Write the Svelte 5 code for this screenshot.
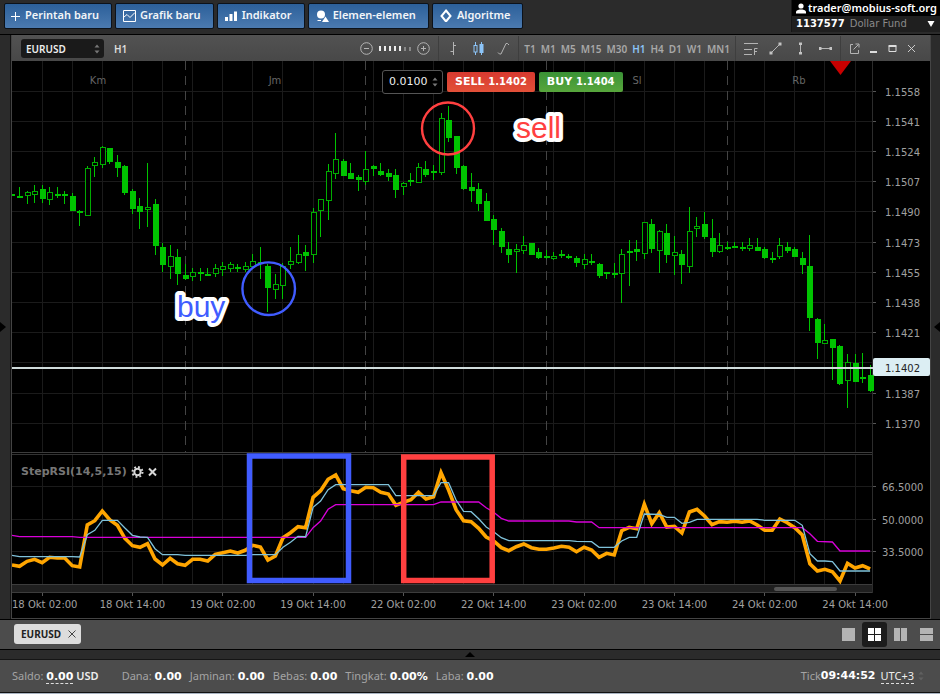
<script>
  const actions = [
    { id: 'plus', label: 'Perintah baru' },
    { id: 'chart', label: 'Grafik baru' },
    { id: 'bars', label: 'Indikator' },
    { id: 'shapes', label: 'Elemen-elemen' },
    { id: 'diamond', label: 'Algoritme' }
  ];
  const frames = ['T1', 'M1', 'M5', 'M15', 'M30', 'H1', 'H4', 'D1', 'W1', 'MN1'];
  let frame = $state('H1');
  let volume = $state('0.0100');
  let layout = $state('grid');
  const layouts = ['single', 'grid', 'columns', 'rows'];

  // One candle per hour: high, low, body top, body bottom, hollow flag
  const candles = [
    [194,196,194,196],[187,198,196,198],[191,204,192,196,1],[185,203,191,195,1],[185,203,189,199],[187,205,192,200,1],
    [187,198,194,196],[191,204,194,196],[193,211,196,211],[210,226,211,213],[166,216,168,216,1],[157,177,162,166,1],
    [146,168,147,165,1],[148,164,148,162],[155,177,162,168],[165,195,166,193],[189,214,191,209],[198,229,206,212],
    [163,227,207,210,1],[199,255,204,246],[243,272,247,265],[245,279,256,267,1],[249,285,257,274],[264,280,275,279],
    [268,281,272,277,1],[268,281,272,274],[268,276,274,276],[264,277,268,274,1],[262,276,266,270,1],[262,272,264,269,1],
    [264,272,267,269],[262,272,266,270,1],[254,268,261,267,1],[247,279,262,264],[264,312,266,288],[274,299,284,290,1],
    [263,299,266,286,1],[247,269,261,265,1],[235,264,254,263,1],[245,271,252,256],[208,263,212,255,1],[199,237,199,211,1],
    [164,220,171,201,1],[133,179,159,174,1],[159,176,161,176],[163,179,173,179],[175,191,177,180],[151,185,169,182,1],
    [165,176,166,169],[163,176,171,175],[169,181,173,177],[169,198,175,190],[182,195,183,187,1],[173,186,180,182],
    [163,183,167,183,1],[161,177,169,175],[165,180,171,173],[113,175,118,173,1],[106,142,120,138],[136,174,136,168],
    [165,190,166,189],[173,202,187,191],[183,211,189,204],[193,221,201,221],[215,245,219,230],[228,253,231,247],
    [242,263,249,255],[244,273,249,252,1],[236,254,245,251,1],[243,255,243,255],[248,259,252,258],[250,259,256,258],
    [252,260,256,259,1],[250,258,254,256],[254,259,256,258],[256,267,258,263],[254,269,259,265,1],[254,265,261,263],
    [263,278,264,276],[272,279,272,274],[263,278,273,275],[249,303,254,274,1],[240,286,251,253],[240,261,249,252],
    [222,259,222,254,1],[219,253,224,249],[230,273,231,251,1],[224,263,233,255],[236,275,252,256,1],[250,284,254,265],
    [207,273,231,267,1],[217,237,226,229,1],[212,239,224,237],[219,257,238,252],[233,253,245,252,1],[242,250,247,249],
    [242,248,246,248],[242,251,247,249],[238,251,245,249,1],[238,251,247,251],[247,259,249,258],[252,263,258,260],
    [238,259,245,257,1],[242,253,247,251],[247,257,249,257],[252,274,258,265],[235,331,266,318],[318,359,319,343],
    [324,344,340,344,1],[339,380,339,348],[345,385,346,384],[354,408,362,381,1],[354,382,363,382],[353,383,377,379],
    [365,392,375,391]
  ];

  // Indicator series as [candle index, offset in thirds of a pixel below the pane's origin]
  const rsi = [375,379,364,358,368,352,354,354,377,381,255,242,213,240,256,295,317,322,311,357,375,355,371,376,358,358,363,343,338,333,339,331,316,321,360,348,293,278,260,263,172,152,118,105,146,152,157,142,143,157,162,196,187,179,157,177,170,98,150,209,242,245,265,291,303,323,332,320,312,323,328,328,324,319,322,335,322,330,352,340,345,272,262,266,193,251,218,261,259,279,216,208,228,254,245,247,244,247,243,255,271,271,237,248,263,285,371,393,388,395,423,370,384,377,387].map((v, i) => [i, v]);
  const fast = [[0,346],[1,350],[8,350],[9,351],[10,284],[11,271],[12,241],[14,241],[15,264],[16,286],[17,291],[18,292],[19,326],[20,344],[22,344],[23,346],[31,346],[32,344],[35,344],[36,322],[37,307],[38,289],[39,290],[40,202],[41,183],[42,149],[43,134],[50,134],[51,167],[56,167],[57,128],[58,128],[59,180],[60,214],[61,215],[62,236],[63,261],[64,275],[65,293],[66,302],[74,302],[75,304],[77,305],[78,322],[80,322],[81,303],[82,292],[83,292],[84,222],[86,223],[87,232],[88,232],[89,250],[90,247],[91,238],[99,238],[100,241],[104,241],[105,256],[106,341],[107,363],[108,363],[109,365],[110,393],[114,393]];
  const slow = [[0,286],[1,290],[8,290],[9,292],[39,292],[40,263],[41,243],[42,208],[43,194],[56,194],[57,186],[62,186],[63,203],[64,217],[65,235],[66,243],[74,243],[75,246],[77,246],[78,263],[105,263],[106,281],[107,304],[109,306],[110,333],[114,333]];

  const x = (i) => 12 + 7.527 * i;
  const line = (series) => series.map(([i, v]) => `${x(i).toFixed(1)},${(440 + v / 3).toFixed(1)}`).join(' ');

  const prices = ['1.1558', '1.1541', '1.1524', '1.1507', '1.1490', '1.1473', '1.1455', '1.1438', '1.1421', '', '1.1387', '1.1370'];
  const priceY = (k) => Math.round(90.6 + 30.2 * k);
  const levels = [['66.5000', 486], ['50.0000', 519], ['33.5000', 551]];
  const times = ['18 Okt 02:00', '18 Okt 14:00', '19 Okt 02:00', '19 Okt 14:00', '22 Okt 02:00', '22 Okt 14:00', '23 Okt 02:00', '23 Okt 14:00', '24 Okt 02:00', '24 Okt 14:00'];
  const days = [[23, 'Km', 98], [47, 'Jm', 275], [71, 'Sl', 637], [95, 'Rb', 799]];
  const columns = Array.from({ length: 28 }, (_, k) => Math.floor(x(4 + 4 * k)));

  const sums = [['Dana:', '0.00'], ['Jaminan:', '0.00'], ['Bebas:', '0.00'], ['Tingkat:', '0.00%'], ['Laba:', '0.00']];
</script>

{#snippet spin()}
  <svg class="spin" viewBox="0 0 6 10" width="6" height="10" aria-hidden="true"><path d="M0.5 3.5 3 0.5 5.5 3.5ZM0.5 6.5 3 9.5 5.5 6.5Z" /></svg>
{/snippet}

<div class="app">
  <header class="top">
    <nav class="actions">
      {#each actions as a (a.id)}
        <button class="action">
          <svg viewBox={a.id === 'plus' ? '2 0 10 14' : '0 0 14 14'} width={a.id === 'plus' ? 10 : 14} height="14" aria-hidden="true">
            {#if a.id === 'plus'}
              <path d="M2 8.5H11M6.5 4V13" class="s" />
            {:else if a.id === 'chart'}
              <path d="M1.5 2.5H13.500V13.500H1.500ZM2 9 5 6.500 8 9.500 13 4.500" class="s" />
            {:else if a.id === 'bars'}
              <path d="M1 9H4V13H1ZM5.500 6H8.500V13H5.500ZM10 3.500H13V13H10Z" class="f" />
            {:else if a.id === 'shapes'}
              <circle cx="6" cy="6.500" r="4" class="f" /><path d="M7 14 10.500 8.500 14 14Z" class="f" /><path d="M2.500 12.500H6" class="s" />
            {:else}
              <path d="M7 2.500 11.500 8 7 13.500 2.500 8Z" class="s thick" />
            {/if}
          </svg>
          {a.label}
        </button>
      {/each}
    </nav>
    <button class="account">
      <span class="user">
        <svg viewBox="0 0 10 11" width="10" height="11" aria-hidden="true"><circle cx="5" cy="3" r="2.600" /><path d="M0 10.500V9Q0 7.300 3.500 6.500H6.500Q10 7.300 10 9V10.500Z" /></svg>
        trader@mobius-soft.org
      </span>
      <span class="fund"><b>1137577</b><i>Dollar Fund</i>
        <svg viewBox="0 0 8 6" width="8" height="6" aria-hidden="true"><path d="M0.500 0H7.500L4 6Z" /></svg>
      </span>
    </button>
  </header>

  <div class="work">
    <aside class="rail"><svg viewBox="0 0 6 10" width="6" height="10" aria-hidden="true"><path d="M0 0 6 5 0 10Z" /></svg></aside>
    <main class="panel">
      <div class="bar">
        <span class="symbol">
          <select aria-label="Instrument"><option>EURUSD</option></select>
          {@render spin()}
        </span>
        <span class="period">{frame}</span>
        <div class="zoom">
          <button aria-label="Zoom out"><svg viewBox="0 0 13 13" width="13" height="13"><circle cx="6.500" cy="6.500" r="5.800" /><path d="M4 6.500H9" /></svg></button>
          <svg class="ticks" viewBox="0 0 32 5" width="32" height="5" aria-hidden="true">
            {#each [0, 1, 2, 3, 4, 5, 6] as t (t)}<rect x={t * 5} y={t < 5 ? 0 : 1} width="2" height={t < 5 ? 5 : 4} fill={t < 5 ? '#eee' : '#888'} />{/each}
          </svg>
          <button aria-label="Zoom in"><svg viewBox="0 0 13 13" width="13" height="13"><circle cx="6.500" cy="6.500" r="5.800" /><path d="M4 6.500H9M6.500 4V9" /></svg></button>
        </div>
        <div class="group">
          <button aria-label="Bars"><svg viewBox="0 0 13 13" width="13" height="13"><path d="M6.500 0V13M3.500 9.500H6.500M6.500 3.500H9" /></svg></button>
          <button aria-label="Candles"><svg viewBox="0 0 13 13" width="13" height="13"><g stroke="#8cc4f8"><path d="M3.500 0V3.500M3.500 10V13M9.500 0V13" /><rect x="2" y="3.500" width="3" height="6.500" /><rect x="8" y="2.500" width="3" height="8" fill="#8cc4f8" /></g></svg></button>
          <button aria-label="Line"><svg viewBox="0 0 13 13" width="13" height="13"><path d="M1 10.500 2.500 12H4L9 1.500H10.500L12 3" /></svg></button>
        </div>
        <div class="group frames">
          {#each frames as f (f)}
            <button class:on={f === frame} onclick={() => (frame = f)}>{f}</button>
          {/each}
        </div>
        <div class="group">
          <button aria-label="Fibonacci"><svg viewBox="0 0 14 13" width="14" height="13"><path d="M0 1.500H14M0 7.500H8M0 12.500H8M10.500 13V6.500H13.500M10.500 9.500H13" /></svg></button>
          <button aria-label="Trend line"><svg viewBox="0 0 13 13" width="13" height="13"><path d="M2 11 11 2" /><path d="M0.500 9.500H3.500V12.500H0.500ZM9.500 0.500H12.500V3.500H9.500Z" class="fill" /></svg></button>
          <button aria-label="Vertical line"><svg viewBox="0 0 13 13" width="13" height="13"><path d="M6.500 2V11" /><path d="M5 0.500H8V3H5ZM5 10H8V12.500H5Z" class="fill" /></svg></button>
          <button aria-label="Horizontal line"><svg viewBox="0 0 13 13" width="13" height="13"><path d="M2 6.500H11" /><path d="M0 5H2.500V8H0ZM10.500 5H13V8H10.500Z" class="fill" /></svg></button>
        </div>
        <div class="group window">
          <button aria-label="Detach"><svg viewBox="0 0 11 11" width="11" height="11"><path d="M4 1.500H1.500V10.500H9.500V7M4.500 6.500 9.500 1.500M6.500 1H10V4.500" /></svg></button>
          <button aria-label="Minimize"><svg viewBox="0 0 11 11" width="11" height="11"><path d="M2 9H9" stroke="#ddd" stroke-width="2" /></svg></button>
          <button aria-label="Maximize"><svg viewBox="0 0 11 11" width="11" height="11"><path d="M2 3.500V8.500H9V3.500" stroke="#ddd" /><path d="M1.500 3H9.500" stroke="#ddd" stroke-width="2" /></svg></button>
          <button aria-label="Close"><svg viewBox="0 0 11 11" width="11" height="11"><path d="M2 2 9 9M9 2 2 9" stroke="#ccc" /></svg></button>
        </div>
      </div>

      <div class="stage">
        <svg class="chart" viewBox="12 61 918 557" role="img" aria-label="EURUSD H1">
          <rect x="12" y="61" width="918" height="557" fill="#000" />
          <g fill="#1b1b1b" shape-rendering="crispEdges">
            {#each columns as c (c)}<rect x={c} y="61" width="1" height="523" />{/each}
            {#each prices as _, k}<rect x="12" y={priceY(k)} width="861" height="1" />{/each}
            {#each levels as l (l[0])}<rect x="12" y={l[1]} width="861" height="1" />{/each}
          </g>
          <g shape-rendering="crispEdges">
            <rect x="12" y="453" width="861" height="2" fill="#000" />
            <rect x="12" y="452" width="861" height="1" fill="#3c3c3c" />
            <rect x="12" y="454" width="861" height="1" fill="#333" />
            <rect x="12" y="584" width="861" height="9" fill="#1f1f1f" />
            <rect x="12" y="584" width="861" height="1" fill="#3c3c3c" />
            <rect x="12" y="592" width="861" height="1" fill="#3c3c3c" />
            <rect x="872" y="61" width="1" height="532" fill="#2c2c2c" />
          </g>
          <rect x="774" y="587" width="63" height="4" rx="2" fill="#555" />
          {#each days as d (d[1])}
            <path d="M{Math.floor(x(d[0])) + 0.5} 61V452" stroke="#444" stroke-dasharray="9 6" />
            <text x={d[2]} y="84" class="day">{d[1]}</text>
          {/each}

          <g shape-rendering="crispEdges" fill="#00c400">
            {#each candles as c, i}
              {@const px = Math.floor(x(i))}
              {#if c[4]}
                <rect x={px} y={c[0]} width="1" height={Math.max(0, c[2] - c[0])} />
                <rect x={px} y={c[3]} width="1" height={Math.max(0, c[1] - c[3])} />
                <rect x={px - 1.5} y={c[2] + 0.5} width="5" height={c[3] - c[2] - 1} fill="#000" stroke="#00ac00" />
              {:else}
                <rect x={px} y={c[0]} width="1" height={c[1] - c[0]} />
                <rect x={i ? px - 2 : px} y={c[2]} width={i ? 6 : 3} height={c[3] - c[2]} />
              {/if}
            {/each}
          </g>

          <polyline points={line(rsi)} fill="none" stroke="#ffa500" stroke-width="3.600" />
          <polyline points={line(slow)} fill="none" stroke="#d800d8" stroke-width="1.300" />
          <polyline points={line(fast)} fill="none" stroke="#7fc2da" stroke-width="1.300" />

          <g class="axis">
            {#each prices as p, k}
              {#if p}
                <rect x="873" y={priceY(k)} width="3" height="1" fill="#555" />
                <text x="885" y={priceY(k) + 5}>{p}</text>
              {/if}
            {/each}
            {#each levels as l (l[0])}
              <rect x="873" y={l[1]} width="3" height="1" fill="#555" />
              <text x="882" y={l[1] + 5}>{l[0]}</text>
            {/each}
            {#each times as t, k}
              <rect x={Math.floor(x(4 + 12 * k))} y="593" width="1" height="3" fill="#555" />
              <text x={k ? x(4 + 12 * k) : 12} y="608" text-anchor={k ? 'middle' : 'start'}>{t}</text>
            {/each}
          </g>
          <rect x="12" y="367" width="861" height="2" fill="#cfdbdb" />
          <rect x="873" y="358" width="57" height="18" rx="2" fill="#dceef3" />
          <text x="885" y="372" class="now">1.1402</text>
          <path d="M830 61H851L840.500 75Z" fill="#c80000" />

          <g fill="none">
            <circle cx="448" cy="128.500" r="26" stroke="#ff4040" stroke-width="2.400" />
            <circle cx="268.700" cy="288.700" r="26.300" stroke="#405cff" stroke-width="2.400" />
            <rect x="249.500" y="456" width="99" height="124.500" stroke="#405cff" stroke-width="5.500" />
            <rect x="403.700" y="457" width="88.500" height="123.500" stroke="#ff4040" stroke-width="5.500" />
          </g>
          <text x="177" y="317" class="note" fill="#405cff">buy</text>
          <text x="516" y="138" class="note" fill="#ff4040">sell</text>

          <text x="21" y="475" class="study">StepRSI(14,5,15)</text>
          <g fill="none" stroke="#d8d8d8">
            <circle cx="137.500" cy="472" r="3.200" stroke-width="2" />
            <circle cx="137.500" cy="472" r="5" stroke-width="2" stroke-dasharray="1.800 2.127" />
            <path d="M149 468.500 156 475.500M156 468.500 149 475.500" stroke-width="2" />
          </g>
        </svg>

        <form class="order" onsubmit={(e) => e.preventDefault()}>
          <span class="lot"><input aria-label="Volume" bind:value={volume} />{@render spin()}</span>
          <button class="sell" type="button">SELL <span>1.1402</span></button>
          <button class="buy" type="button">BUY <span>1.1404</span></button>
        </form>
      </div>
    </main>
    <aside class="rail right"><svg viewBox="0 0 6 10" width="6" height="10" aria-hidden="true"><path d="M6 0 0 5 6 10Z" /></svg></aside>
  </div>

  <div class="tabs">
    <button class="tab">EURUSD <svg viewBox="0 0 8 8" width="8" height="8" aria-hidden="true"><path d="M0.500 0.500 7.500 7.500M7.500 0.500 0.500 7.500" stroke="#444" /></svg></button>
    <div class="views">
      {#each layouts as l (l)}
        <button class:on={l === layout} aria-label={l} onclick={() => (layout = l)}>
          <svg viewBox="0 0 13 13" width="13" height="13">
            <rect width="13" height="13" />
            {#if l === 'grid' || l === 'columns'}<path d="M6.500 0V13" />{/if}
            {#if l === 'grid' || l === 'rows'}<path d="M0 6.500H13" />{/if}
          </svg>
        </button>
      {/each}
    </div>
  </div>
  <div class="fold"><svg viewBox="0 0 10 5" width="10" height="5" aria-hidden="true"><path d="M0 5 5 0 10 5Z" /></svg></div>
  <footer class="status">
    <span class="balance">Saldo: <b class="dash">0.00</b> <em>USD</em></span>
    {#each sums as s (s[0])}<span>{s[0]} <b>{s[1]}</b></span>{/each}
    <span class="clock">Tick<b>09:44:52</b> <button>UTC+3</button>{@render spin()}</span>
  </footer>
</div>

<style>
  :global(body) { margin: 0; background: #2a2a2a; }
  .app { font: 11px/14px "Noto Sans", "Open Sans", sans-serif; color: #ddd; background: #2a2a2a; border-bottom: 1px solid #a9b4c2; }
  button, input, select { font: inherit; color: inherit; margin: 0; padding: 0; border: 0; background: none; }
  svg { display: block; flex: none; }

  .top { display: flex; justify-content: space-between; align-items: flex-start; height: 34px; border-bottom: 1px solid #000; background: #2b2b2b; }
  .actions { display: flex; gap: 3px; padding: 3px 4px; }
  .action { display: flex; align-items: center; gap: 4px; height: 26px; padding: 0 12px 2px 6px; border: 1px solid #0c121a; border-radius: 2px; background: linear-gradient(#2c609a, #4b7ab0); color: #f2f5f8; font-weight: 600; white-space: nowrap; }
  .action .s { fill: none; stroke: #fff; stroke-width: 1; }
  .action .thick { stroke-width: 2; }
  .action .f { fill: #fff; }
  .account { width: 149px; text-align: left; background: #1f1f1f; border-left: 1px solid #161616; }
  .user, .fund { display: flex; align-items: center; height: 16px; padding: 0 5px 0 4px; }
  .user { gap: 2px; background: #000; color: #fff; font-weight: 600; white-space: nowrap; }
  .fund { gap: 5px; }
  .fund b, .fund i { font-family: "DejaVu Sans", sans-serif; font-size: 10px; }
  .fund b { color: #fff; }
  .fund i { flex: 1; font-style: normal; color: #8a8a8a; }
  .account svg { fill: #fff; }

  .work { display: flex; border-bottom: 1px solid #000; }
  .rail { width: 11px; display: flex; align-items: center; background: #2b2b2b; box-shadow: inset -1px 0 #111; }
  .rail.right { width: 9px; justify-content: flex-end; box-shadow: none; }
  .rail svg { fill: #000; }
  .panel { flex: 1; min-width: 0; border: 1px solid #444; border-top: 0; }
  .bar { display: flex; align-items: center; box-sizing: border-box; height: 26px; padding-top: 1px; background: linear-gradient(#525252, #484848); }
  .symbol { position: relative; margin-left: 9px; }
  .symbol select { display: block; width: 83px; height: 19px; padding: 0 5px; appearance: none; border-radius: 3px; background: #1a1a1a; color: #eee; font-size: 10px; font-weight: 600; }
  .symbol .spin { position: absolute; right: 4px; top: 5px; }
  .spin { fill: #777; }
  .period { margin-left: 10px; font-size: 10px; font-weight: 600; }
  .zoom { display: flex; align-items: center; gap: 6px; margin-left: auto; padding-right: 8px; }
  .bar button { display: flex; align-items: center; justify-content: center; }
  .bar button svg { fill: none; stroke: #b4b4b4; }
  .bar button .fill { fill: #c4c4c4; stroke: none; }
  .group { display: flex; align-items: center; height: 100%; padding: 0 2px; border-left: 1px solid #3e3e3e; }
  .group button { width: 25px; height: 24px; }
  .frames { gap: 5px; padding: 0 5px 0 5px; color: #a8a8a8; font-size: 10px; font-weight: 600; }
  .frames button { width: auto; }
  .frames .on { color: #8cc4f8; }
  .window { padding: 0 9px 0 4px; }
  .window button { width: 19px; }

  .stage { position: relative; }
  .chart { width: 100%; height: auto; }
  .day, .axis text, .now { font: 10px "DejaVu Sans", sans-serif; fill: #a0a0a0; }
  .day { fill: #666; text-anchor: middle; }
  .now { fill: #222; }
  .note { font: 30px "Liberation Sans", sans-serif; stroke: #fff; stroke-width: 8px; stroke-linejoin: round; paint-order: stroke; }
  .study { font: bold 11px "DejaVu Sans", sans-serif; fill: #777; }
  .order { position: absolute; left: 40.3%; top: 9px; display: flex; align-items: center; gap: 4px; font: 600 11px/14px "DejaVu Sans", sans-serif; }
  .lot { display: flex; align-items: center; box-sizing: border-box; width: 61px; height: 24px; padding: 0 4px 0 6px; border: 1px solid #555; border-radius: 3px; background: #000; }
  .lot input { width: 100%; min-width: 0; outline: 0; color: #eee; font-weight: 400; }
  .sell, .buy { height: 20px; padding: 0 8px; border-radius: 2px; color: #fff; font-weight: 700; white-space: nowrap; }
  .sell span, .buy span { font-weight: 600; font-size: 10px; }
  .sell { background: linear-gradient(#d83a30, #e25038); }
  .buy { background: linear-gradient(#3a9236, #58a63c); }

  .tabs { display: flex; align-items: center; justify-content: space-between; height: 28px; padding: 0 1px 1px 14px; background: #4c4c4c; border-bottom: 1px solid #000; }
  .tab { display: flex; align-items: center; gap: 7px; height: 20px; padding: 0 5px 0 7px; border-radius: 3px; background: #dcdcdc; color: #222; font-size: 10px; font-weight: 700; }
  .views { display: flex; gap: 1px; }
  .views button { display: flex; align-items: center; justify-content: center; width: 25px; height: 25px; border-radius: 3px; }
  .views rect { fill: #b4b4b4; }
  .views path { stroke: #4c4c4c; }
  .views .on { background: #1c1c1c; }
  .views .on rect { fill: #fff; }
  .views .on path { stroke: #1c1c1c; }
  .fold { display: flex; align-items: center; justify-content: center; height: 9px; border-bottom: 1px solid #151515; background: #2b2b2b; }
  .status { display: flex; align-items: center; gap: 8px; height: 32px; padding: 0 16px 0 12px; background: #4c4c4c; border-bottom: 1px solid #111; color: #a4a4a4; white-space: nowrap; }
  .status b { color: #fff; font: 700 11px/14px "DejaVu Sans", sans-serif; }
  .status em { color: #eee; font-style: normal; font-weight: 600; }
  .balance { margin-right: 15px; }
  .dash, .status button { border-bottom: 1px dashed #ddd; }
  .clock { display: flex; align-items: center; margin-left: auto; }
  .status button { margin-left: 5px; color: #eee; }
  .clock .spin { margin-left: 4px; fill: #606060; }
</style>
